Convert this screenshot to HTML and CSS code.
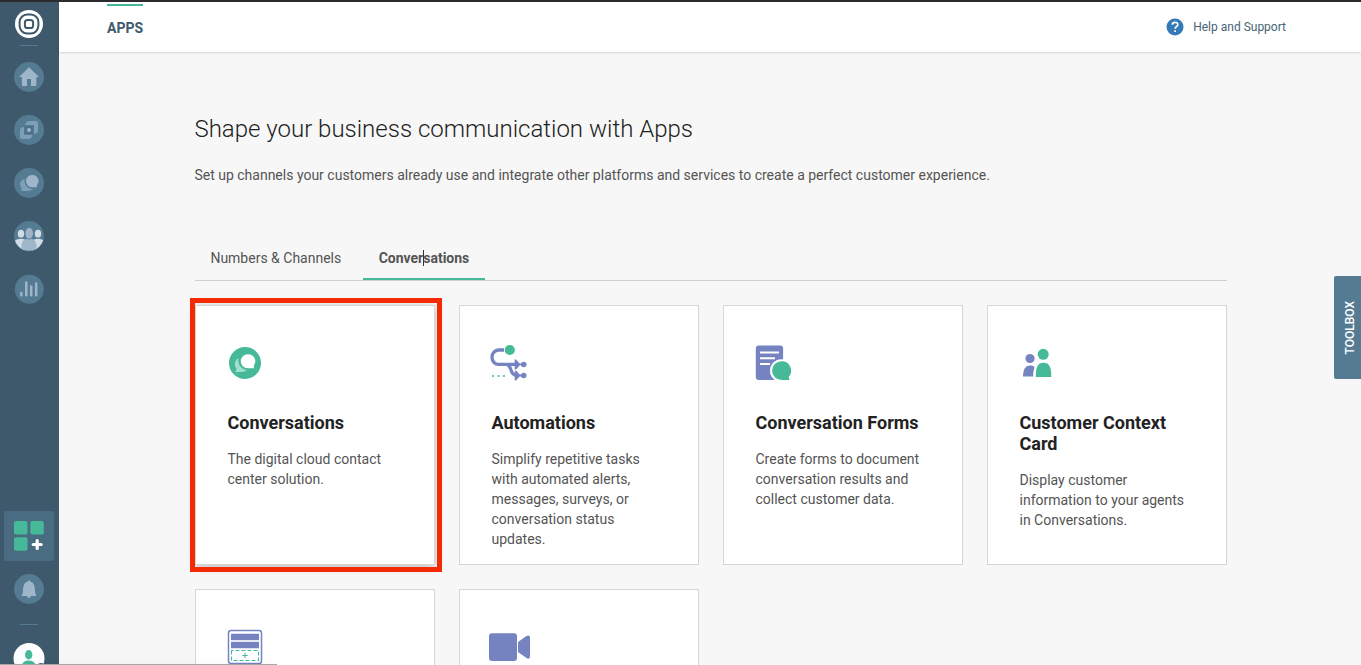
FILE: index.html
```html
<!DOCTYPE html>
<html lang="en">
<head>
<meta charset="utf-8">
<title>Apps</title>
<link rel="stylesheet" href="styles.css">
</head>
<body>
<div class="app">
  <nav class="sidebar">
    <svg class="logo" viewBox="0 0 28 28"><circle cx="14" cy="14" r="14" fill="#fff"/><rect x="4.6" y="4.6" width="18.8" height="18.8" rx="7.6" fill="none" stroke="#3e596b" stroke-width="2"/><rect x="9.9" y="9.9" width="8.2" height="8.2" rx="2.6" fill="none" stroke="#3e596b" stroke-width="2"/></svg>
    <span class="rule rule-top"></span>
    <div class="nav-main">
      <svg class="nav-icon" viewBox="0 0 30 30"><circle cx="15" cy="15" r="15" fill="#557b92"/><path d="M15 5.2L25 15H22.3V23.2Q22.3 24 21.5 24H17V17H13V24H8.700Q7.900 24 7.900 23.200V15H5Z" fill="#9fb6ca"/></svg>
      <svg class="nav-icon" viewBox="0 0 30 30"><circle cx="15" cy="15" r="15" fill="#557b92"/><path d="M11 10Q12 6 16 6H22Q24 6 24 8V15Q24 18 20 19V10Z" fill="#7e9fb8"/><path d="M10 12V20H18.500Q17.500 24 14 24H8Q6 24 6 22V16Q6 12 10 12Z" fill="#7e9fb8"/><rect x="11" y="11" width="8" height="8" rx="1" fill="#4c7088"/><circle cx="15" cy="15" r="2" fill="#9fb6ca"/></svg>
      <svg class="nav-icon" viewBox="0 0 30 30"><circle cx="15" cy="15" r="15" fill="#557b92"/><path d="M11 10.500C4.500 13 5.500 17.500 7.500 19.500V23H13Q17 23 19 21C12 20.500 9.500 15 11 10.500Z" fill="#7e9fb8"/><path d="M18 7A6 6 0 1 0 18 19.200H22.900V17A6 6 0 0 0 18 7Z" fill="#9fb6ca"/></svg>
      <svg class="nav-icon" viewBox="0 0 30 30"><defs><clipPath id="people"><circle cx="15" cy="15" r="14.700"/></clipPath></defs><circle cx="15" cy="15" r="15" fill="#557b92"/><g clip-path="url(#people)"><ellipse cx="7" cy="12.700" rx="3.200" ry="3.900" fill="#cfdce5"/><ellipse cx="24" cy="12.700" rx="3.200" ry="3.900" fill="#cfdce5"/><path d="M0 21Q2 17.800 7 17.800T12 21V30H0ZM18 21Q19 17.800 24 17.800T30 21V30H18Z" fill="#cfdce5"/><path d="M7.500 30V24Q8 17.500 15 17.500T22.500 24V30Z" fill="#9fb6ca"/><ellipse cx="15.200" cy="12.300" rx="4.200" ry="5.800" fill="#9fb6ca" stroke="#557b92" stroke-width=".8"/></g></svg>
      <svg class="nav-icon" viewBox="0 0 30 30"><circle cx="15.300" cy="15.300" r="14.500" fill="#557b92"/><path d="M7.300 19V21.300M12.300 8.500V21.300M17.200 12.500V21.300M22.200 9.500V21.300" stroke="#9fb6ca" stroke-width="2.500" stroke-linecap="round"/></svg>
    </div>
    <div class="nav-apps"><svg viewBox="0 0 50 50"><g fill="#45b998"><rect x="10" y="10" width="13.500" height="13.500" rx="2"/><rect x="26.300" y="10" width="13.500" height="13.500" rx="2"/><rect x="10" y="26.300" width="13.500" height="13.500" rx="2"/></g><path d="M33.200 29.500V37.500M29.200 33.500H37.200" stroke="#fff" stroke-width="3.200" stroke-linecap="round"/></svg></div>
    <svg class="nav-icon bell" viewBox="0 0 30 30"><circle cx="15" cy="15" r="15" fill="#557b92"/><path d="M15 6.200C16 6.200 16 7 16 7.500C20 8.300 20.800 12 21 17C21.100 19.500 22 20 22.300 22H7.700C8 20 8.900 19.500 9 17C9.200 12 10 8.300 14 7.500C14 7 14 6.200 15 6.200ZM13 22H17Q16.500 24 15 24T13 22Z" fill="#9fb6ca"/></svg>
    <span class="rule rule-bottom"></span>
    <svg class="avatar" viewBox="0 0 32 32"><circle cx="16" cy="15.500" r="15.500" fill="#fff"/><ellipse cx="15.700" cy="11.800" rx="3.700" ry="4.700" fill="#45b998"/><path d="M8.500 24Q9 17.500 15.700 17.500T23 24Z" fill="#45b998"/><circle cx="28" cy="25.500" r="5.500" fill="#3e596b"/></svg>
  </nav>
  <div class="page">
    <header class="topbar">
      <span class="section">APPS</span>
      <div class="help">
        <svg viewBox="0 0 18 18"><circle cx="9" cy="9" r="8.500" fill="#337ab7"/><path d="M6.300 6.800Q6.400 4.300 9.100 4.300T11.800 6.700C11.800 8.500 9.100 8.500 9.100 10.800M9.100 12.300V14.100" fill="none" stroke="#fff" stroke-width="1.700"/></svg>
        <span>Help and Support</span>
      </div>
    </header>
    <main class="content">
      <h1>Shape your business communication with Apps</h1>
      <p class="lead">Set up channels your customers already use and integrate other platforms and services to create a perfect customer experience.</p>
      <div class="tabs">
        <div class="tab">Numbers &amp; Channels</div>
        <div class="tab active">Conversations<i class="text-cursor"></i></div>
      </div>
      <div class="cards">
        <article class="card raised">
          <svg class="card-icon" viewBox="0 0 44 44"><circle cx="22" cy="22" r="16" fill="#45b998"/><path d="M15.500 17C10.500 20.500 11.500 25.500 13.500 27.500L12.500 31H18Q22 31 24 29C17 28 14.500 22 15.500 17Z" fill="#a4decf"/><path d="M24.800 13.200A7 7 0 1 0 24.800 27.300H30.900V24.300A7 7 0 0 0 24.800 13.200Z" fill="#fff"/></svg>
          <h2>Conversations</h2><p>The digital cloud contact center solution.</p>
        </article>
        <article class="card">
          <svg class="card-icon shifted" viewBox="0 0 44 44"><path d="M16 9H10.500A6.500 7.200 0 0 0 10.500 23.400H29M19 24C24.500 24 21 34.500 28.500 34.500H29" fill="none" stroke="#7584c1" stroke-width="3.300"/><path d="M31 23.400H35M31 34.500H35" stroke="#7584c1" stroke-width="1.800"/><path d="M26.700 18.400Q27.500 18.200 28.500 19L32.500 23.400L28.500 28Q27.500 28.800 26.700 28.400ZM26.700 29.500Q27.500 29.300 28.500 30L32.500 34.500L28.500 39Q27.500 39.900 26.700 39.500Z" fill="#7584c1"/><circle cx="35.700" cy="23.500" r="2.800" fill="#7584c1"/><circle cx="35.700" cy="34.500" r="2.800" fill="#7584c1"/><circle cx="21.800" cy="9" r="5.100" fill="#45b998"/><path d="M4 35H6M9.500 35H11.500M15 35H17" stroke="#45b998" stroke-width="1.700"/></svg>
          <h2>Automations</h2><p>Simplify repetitive tasks with automated alerts, messages, surveys, or conversation status updates.</p>
        </article>
        <article class="card">
          <svg class="card-icon shifted" viewBox="0 0 44 44"><rect x="3.800" y="4.500" width="27.300" height="34.500" rx="3" fill="#7584c1"/><path d="M8 11.500H27M8 17.200H23M8 23H18" stroke="#fff" stroke-width="2"/><circle cx="29.500" cy="29.700" r="11.500" fill="#fff"/><path d="M31 39H39V44H31Z" fill="#fff"/><path d="M29.500 20.300A9.400 9.400 0 1 0 29.500 39.100H37.500L36.700 36A9.400 9.400 0 0 0 29.500 20.300Z" fill="#45b998"/></svg>
          <h2>Conversation Forms</h2><p>Create forms to document conversation results and collect customer data.</p>
        </article>
        <article class="card">
          <svg class="card-icon shifted" viewBox="0 0 44 44"><circle cx="14" cy="17.500" r="4.600" fill="#7584c1"/><path d="M7 35.500C7.500 28 9 25 14 24.600C16.500 24.600 18.500 25 18.500 27C17.300 30 17.200 32 17.200 35.500Z" fill="#7584c1"/><circle cx="27.200" cy="13.300" r="5.500" fill="#45b998"/><path d="M19.800 36C19.800 26 21.500 21.700 27.500 21.700S35.300 26 35.300 36Z" fill="#45b998"/></svg>
          <h2>Customer Context Card</h2><p>Display customer information to your agents in Conversations.</p>
        </article>
        <article class="card">
          <svg class="card-icon" viewBox="0 0 44 44"><rect x="5.500" y="5.500" width="33" height="33" rx="2.500" fill="#fff" stroke="#7584c1" stroke-width="1.500"/><path d="M8 8.800H36V15H8ZM8 17H36V23.300H8Z" fill="#7584c1"/><path d="M8 16H36" stroke="#c2c9e4" stroke-width=".8"/><rect x="8.500" y="25.500" width="27" height="10" fill="none" stroke="#45b998" stroke-width="1.100" stroke-dasharray="4 2" stroke-dashoffset="2"/><path d="M22 27.800V33.200M19.300 30.500H24.700" stroke="#45b998"/></svg>
        </article>
        <article class="card">
          <svg class="card-icon shifted" viewBox="0 0 44 44"><rect x="1" y="8.300" width="28" height="27.700" rx="3" fill="#7584c1"/><path d="M30 17L38.500 11Q42 9.500 42 13V31Q42 35 38.500 33L30 27Z" fill="#7584c1"/></svg>
        </article>
      </div>
    </main>
  </div>
</div>
<div class="highlight"></div>
<div class="toolbox"><span>TOOLBOX</span></div>
<div class="status-edge"></div>
</body>
</html>
```
FILE: styles.css
```css
* { box-sizing: border-box; }
body { margin: 0; height: 665px; overflow: hidden; background: #f7f7f7; font-family: Roboto, sans-serif; color: #545454; }
svg { display: block; flex: none; }
.app { display: flex; height: 665px; border-top: 2px solid #2d2b30; overflow: hidden; }
.sidebar { width: 59px; flex: none; background: #3e596b; display: flex; flex-direction: column; align-items: center; padding: 8px 1px 0 0; }
.logo { width: 28px; height: 28px; }
.rule { width: 18px; height: 1px; flex: none; background: #557b92; }
.rule-top { margin-top: 7px; }
.nav-main { display: flex; flex-direction: column; gap: 23px; margin-top: 16px; }
.nav-icon { width: 30px; height: 30px; }
.nav-apps { width: 50px; height: 50px; margin-top: auto; flex: none; background: #4a6c82; border-radius: 2px; }
.bell { margin-top: 13px; }
.rule-bottom { margin-top: 20px; }
.avatar { width: 32px; height: 32px; margin: 18px 0 -10px; }
.page { flex: 1; }
.topbar { height: 50px; background: #fff; box-shadow: 0 1px 2px rgba(0,0,0,.14); display: flex; justify-content: space-between; padding: 0 75px 0 48px; }
.section { height: 34px; padding-top: 14px; border-top: 2px solid #45b998; margin-top: 2px; font-size: 14px; line-height: 17px; font-weight: 700; color: #3e596b; }
.help { display: flex; align-items: center; gap: 9px; font-size: 12px; color: #456477; }
.help svg { width: 18px; height: 18px; }
.content { width: 1032px; margin-left: 136px; padding-top: 60px; }
h1 { margin: 0 0 0 -0.6px; font-weight: 300; font-size: 24px; line-height: 34px; color: #222; }
.lead { margin: 19px 0 0 -0.6px; font-size: 14px; line-height: 20px; white-space: nowrap; }
.tabs { height: 46px; margin-top: 50px; display: flex; gap: 6px; border-bottom: 1px solid #d0d0d0; }
.tab { height: 45px; padding: 13px 16px 0 15.4px; font-size: 14px; line-height: 20px; }
.tab.active { position: relative; font-weight: 700; border-bottom: 2px solid #45b998; }
.text-cursor { position: absolute; left: 60px; top: 15px; width: 1px; height: 16px; background: #333; }
.cards { display: grid; grid-template-columns: repeat(4, 240px); grid-auto-rows: 260px; gap: 24px; margin-top: 24px; }
.card { background: #fff; border: 1px solid #d6d6d6; padding: 35px 32px 0; }
.card.raised { box-shadow: 0 2px 8px rgba(0,0,0,.25); }
.card-icon { width: 44px; height: 44px; margin-left: -5px; }
.card-icon.shifted { margin-left: -4px; }
h2 { margin: 27px 0 0 -0.5px; font-size: 18px; line-height: 21px; font-weight: 700; color: #222; }
.card p { margin: 16px 0 0 -0.5px; font-size: 14px; line-height: 20px; }
.highlight { position: absolute; left: 190px; top: 298px; width: 252px; height: 274px; border: 5px solid #f42a05; }
.toolbox { position: absolute; right: 0; top: 276px; width: 27px; height: 103px; background: #557b92; border-radius: 2px 0 0 2px; display: flex; align-items: center; justify-content: center; padding-left: 5px; }
.toolbox span { writing-mode: vertical-rl; transform: rotate(180deg); font-size: 12px; line-height: 14px; font-weight: 500; color: #fff; }
.status-edge { position: absolute; left: 0; top: 664px; width: 277px; height: 1px; background: #a8a8a8; box-shadow: 0 0 9px rgba(0,0,0,.15); }
```
